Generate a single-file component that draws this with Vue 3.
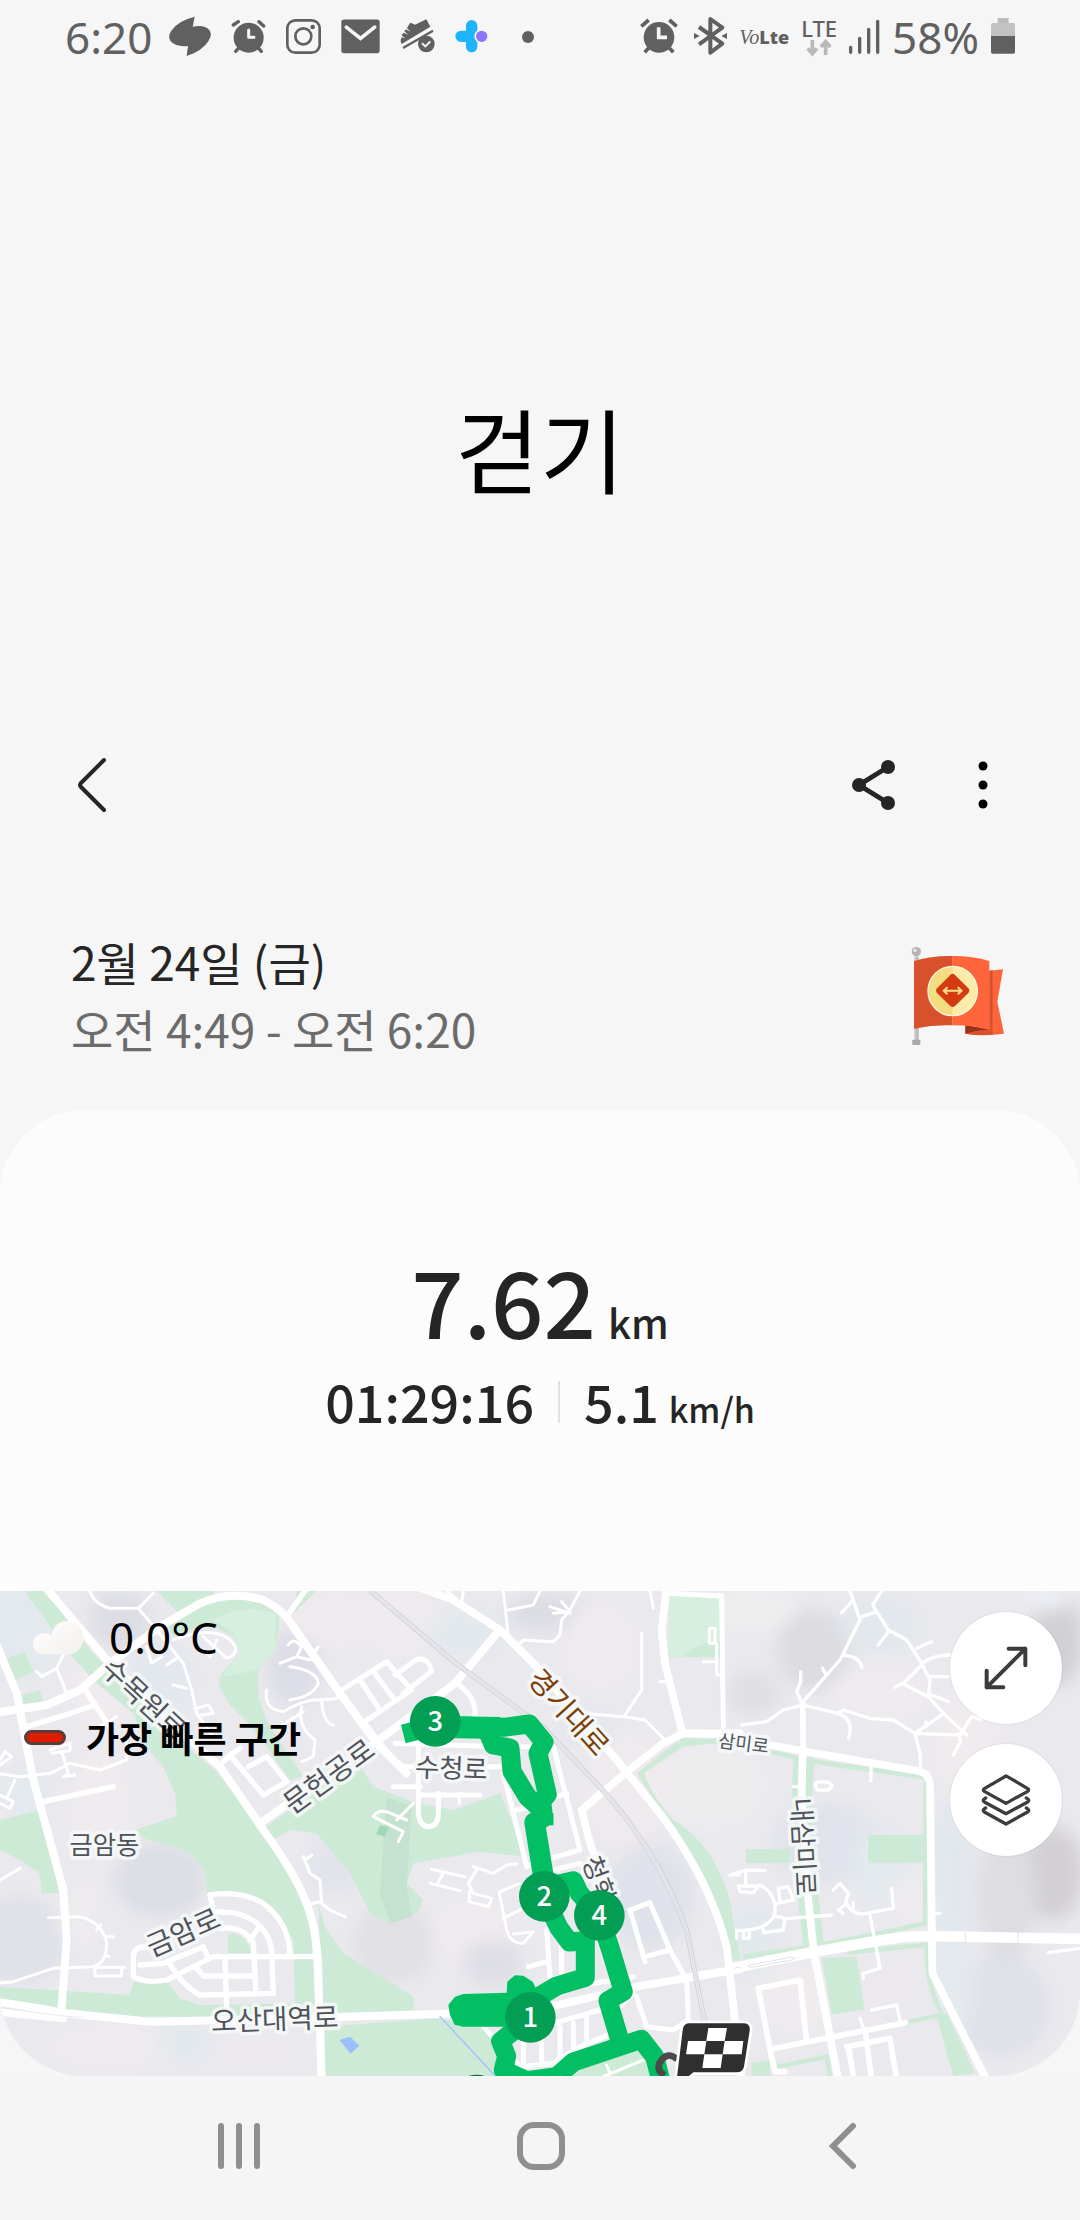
<template>
  <div class="screen">
    <header class="status-bar">
      <div class="status-group">
        <span class="status-text">6:20</span>
        <svg class="icon-leaf" width="42" height="41" viewBox="387 48 126 123">
          <path fill="#606060" d="M464 50L458 80Q494 74 508 90Q518 104 506 122Q488 152 440 168L444 138Q408 142 392 124Q382 110 394 92Q414 62 464 50Z" />
        </svg>
        <svg class="icon-alarm" width="35" height="41" viewBox="574 48 105 123">
          <g fill="none" stroke="#606060" stroke-width="10" stroke-linecap="round">
            <path d="M581 75L596 65M658 65L672 78M588 154L598 143M665 154L655 143" />
          </g>
          <circle cx="627" cy="113" r="45" fill="#606060" />
          <path d="M627 90V112H643" fill="none" stroke="#f6f6f6" stroke-width="9" stroke-linecap="round" stroke-linejoin="round" />
        </svg>
        <svg class="icon-insta" width="35" height="41" viewBox="741 48 105 123">
          <g fill="none" stroke="#606060" stroke-width="8">
            <rect x="745" y="61" width="97" height="97" rx="24" />
            <circle cx="793" cy="109" r="24" />
          </g>
          <circle cx="821" cy="81" r="7" fill="#606060" />
        </svg>
        <svg class="icon-mail" width="39" height="41" viewBox="905 48 118 123">
          <rect x="906" y="58" width="116" height="102" rx="8" fill="#606060" />
          <path d="M921 81L964 115L1007 81" fill="none" stroke="#f6f6f6" stroke-width="11" stroke-linecap="round" />
        </svg>
        <svg class="icon-shoe" width="35" height="41" viewBox="1085 48 105 123">
          <path fill="#606060" d="M1113 72L1117 68L1130 74L1164 58L1176 80L1090 132Q1084 122 1090 112L1100 115L1090 106L1096 98L1109 104L1098 94L1103 88L1116 95L1106 84Z" />
          <path d="M1094 144L1184 92" stroke="#606060" stroke-width="7" />
          <circle cx="1164" cy="132" r="25" fill="#606060" />
          <path d="M1151 130L1161 139L1176 124" fill="none" stroke="#f6f6f6" stroke-width="6" />
        </svg>
        <svg class="icon-plus" width="33" height="41" viewBox="1256 48 99 123">
          <path d="M1306 77V140M1274 109H1306" fill="none" stroke="#1eb4fb" stroke-width="34" stroke-linecap="round" />
          <circle cx="1336" cy="109" r="22" fill="#f6f6f6" />
          <circle cx="1336" cy="109" r="17" fill="#8a75ff" />
        </svg>
        <span class="dot"></span>
      </div>
      <div class="status-group">
        <svg class="icon-clock" width="38" height="41" viewBox="126 48 114 123">
          <path d="M130 79L152 60M214 60L236 79M140 157L152 144M226 157L214 144" stroke="#606060" stroke-width="11" />
          <circle cx="183" cy="112" r="46" fill="#606060" />
          <path d="M182 82V112H207" fill="none" stroke="#f6f6f6" stroke-width="11" />
        </svg>
        <svg class="icon-bt" width="33" height="41" viewBox="291 48 99 123">
          <path d="M306 81L376 131L340 158V57L376 83L306 133" fill="none" stroke="#606060" stroke-width="12" stroke-linejoin="round" />
          <path d="M291 99L308 108L291 117ZM390 99L373 108L390 117Z" fill="#606060" />
        </svg>
        <span class="volte"><i>Vo</i><b>Lte</b></span>
        <span class="lte">
          LTE
          <svg width="26" height="18" viewBox="0 0 78 54">
            <path d="M19 3V42M5 28L19 44L33 28M59 48V8M45 24L59 8L73 24" fill="none" stroke="#b9b9b9" stroke-width="11" />
          </svg>
        </span>
        <svg class="icon-signal" width="31" height="41" viewBox="743 48 93 123">
          <path d="M748 142V157M775 115V157M802 88V157M829 64V157" stroke="#606060" stroke-width="10" stroke-linecap="round" />
        </svg>
        <span class="status-text battery-text">58%</span>
        <svg width="24" height="41" viewBox="1173 48 72 123">
          <path d="M1193 54H1226V70H1193Z" fill="#bdbdbd" />
          <path d="M1173 74Q1173 69 1178 69H1240Q1245 69 1245 74V108H1173Z" fill="#c2c2c2" />
          <path d="M1173 108H1245V156Q1245 161 1240 161H1178Q1173 161 1173 156Z" fill="#606060" />
        </svg>
      </div>
    </header>

    <h1 class="title">걷기</h1>

    <div class="toolbar">
      <button type="button" class="icon-btn" aria-label="뒤로">
        <svg width="32" height="60" viewBox="0 0 32 60">
          <path d="M28 5L5 28Q3 30 5 32L28 55" fill="none" stroke="#252525" stroke-width="4" stroke-linecap="round" />
        </svg>
      </button>
      <div class="toolbar-actions">
        <button type="button" class="icon-btn" aria-label="공유">
          <svg width="46" height="54" viewBox="0 0 46 54">
            <path d="M37 9L8 27L37 45" fill="none" stroke="#252525" stroke-width="5" />
            <g fill="#252525">
              <circle cx="37" cy="9" r="7" />
              <circle cx="8" cy="27" r="7" />
              <circle cx="37" cy="45" r="7" />
            </g>
          </svg>
        </button>
        <button type="button" class="icon-btn" aria-label="더보기">
          <svg width="12" height="54" viewBox="0 0 24 108">
            <circle cx="12" cy="16" r="9" />
            <circle cx="12" cy="54" r="9" />
            <circle cx="12" cy="92" r="9" />
          </svg>
        </button>
      </div>
    </div>

    <section class="summary">
      <div>
        <p class="date">2월 24일 (금)</p>
        <p class="time">오전 4:49 - 오전 6:20</p>
      </div>
      <svg width="130" height="130" viewBox="0 0 390 390">
        <rect x="72" y="80" width="14" height="255" fill="#b9b9b9" />
        <rect x="72" y="80" width="5" height="255" fill="#d5d5d5" />
        <rect x="67" y="329" width="24" height="16" rx="2" fill="#a9a9a9" />
        <circle cx="79" cy="65" r="14" fill="#b5b5b5" />
        <circle cx="75" cy="61" r="5" fill="#ededed" />
        <path d="M226 285L298 296V122L339 118L322 215L342 311Q284 318 226 311Z" fill="#ff653b" />
        <path d="M298 122L308 121V315L298 315Z" fill="#d9502c" />
        <path d="M226 285L298 299Q262 300 226 311Z" fill="#96331b" />
        <path d="M226 311Q262 300 298 299V315Q262 317 226 311Z" fill="#d9502c" />
        <path d="M72 93Q130 76 188 78V286Q130 284 72 296Z" fill="#d9502c" />
        <path d="M188 78Q250 78 298 93V299Q250 286 188 286Z" fill="#ff653b" />
        <circle cx="188" cy="183" r="74" fill="#fdebaa" stroke="#fff7dc" stroke-width="4" />
        <path d="M188 111A72 72 0 0 0 188 255Z" fill="#f6dc80" />
        <path d="M181 135Q188 128 195 135L235 175Q241 182 235 189L195 228Q188 234 181 228L141 189Q135 182 141 175Z" fill="#d63a10" />
        <path d="M168 182H208M171 173L161 182L171 191M205 173L215 182L205 191" fill="none" stroke="#fbe18c" stroke-width="6" stroke-linecap="round" stroke-linejoin="round" />
      </svg>
    </section>

    <main class="card">
      <div class="stats">
        <p class="distance">
          <span>7.62</span>
          <span class="distance-unit">km</span>
        </p>
        <div class="stats-row">
          <span class="value">01:29:16</span>
          <span class="divider"></span>
          <span class="value">5.1</span>
          <span class="unit">km/h</span>
        </div>
      </div>

      <div class="map">
        <svg class="map-canvas" viewBox="0 33 3240 1455" preserveAspectRatio="xMidYMid slice">
          <defs>
            <filter id="soft" x="-30%" y="-30%" width="160%" height="160%">
              <feGaussianBlur stdDeviation="26" />
            </filter>
          </defs>
          <rect y="33" width="3240" height="1455" fill="#eae9ee" />

          <!-- 지형 음영 -->
          <g filter="url(#soft)">
            <ellipse
              v-for="(s, i) in shades"
              :key="i"
              :cx="s[0]"
              :cy="s[1]"
              :rx="s[2]"
              :ry="s[3]"
              :fill="s[4]"
            />
          </g>

          <!-- 녹지 -->
          <g fill="#cdead6">
            <path v-for="d in parks" :key="d" :d="d" />
            <g transform="translate(1020 0)">
              <path v-for="d in parksCenter" :key="d" :d="d" />
              <path d="M140 650L215 680L200 920L215 1010L150 1030L120 940Z" fill="#bfdccb" opacity="0.6" />
              <path d="M120 735L146 743L134 770L108 762Z" fill="#a3d8b6" />
              <path d="M990 45L1140 50L1145 180Q1060 190 1030 230H985Z" fill="#d7efdf" />
            </g>
            <g transform="translate(2040 0)">
              <path v-for="d in parksRight" :key="d" :d="d" />
              <g fill="none" stroke="#cdead6">
                <path d="M372 530L366 650L385 960L402 1100" stroke-width="62" />
                <path d="M0 480L110 484L260 512L400 545L738 592L735 1030L620 1055L420 1095L190 1130" stroke-width="14" />
                <path d="M500 1118L742 1094Q736 1210 785 1300M685 1326L785 1304M290 1460L440 1430L450 1488" stroke-width="14" />
              </g>
            </g>
          </g>
          <path d="M640 120Q720 70 830 100Q820 150 830 200L775 270L665 290L720 220L700 160Z" fill="#d6efdf" />
          <path d="M1018 1380L1050 1370L1078 1397L1052 1421Z" fill="#9cc0ff" />

          <!-- 도로 -->
          <g class="roads">
            <g stroke-width="9"><path v-for="d in lanes" :key="d" :d="d" /></g>
            <g stroke-width="16"><path v-for="d in streets" :key="d" :d="d" /></g>
            <g stroke-width="24"><path v-for="d in avenues" :key="d" :d="d" /></g>
            <path d="M5 1284L190 1308L250 1312" stroke="#dcdfe4" stroke-width="2" />
          </g>
          <g class="roads" transform="translate(1020 0)">
            <path d="M300 1310L466 1488" stroke="#9cc0ff" stroke-width="4" />
            <g stroke-width="9"><path v-for="d in lanesCenter" :key="d" :d="d" /></g>
            <g stroke-width="15"><path v-for="d in streetsCenter" :key="d" :d="d" /></g>
            <g stroke-width="23"><path v-for="d in avenuesCenter" :key="d" :d="d" /></g>
          </g>
          <g class="roads" transform="translate(2040 0)">
            <g stroke-width="10"><path v-for="d in lanesRight" :key="d" :d="d" /></g>
            <g stroke-width="17"><path v-for="d in streetsRight" :key="d" :d="d" /></g>
            <g stroke-width="23"><path v-for="d in avenuesRight" :key="d" :d="d" /></g>
            <path d="M0 1194L130 1172" stroke-width="20" />
            <path d="M150 1166L400 1116L620 1078Q680 1068 740 1068L1210 1077" stroke-width="32" />
            <path d="M163 1165Q174 1158 184 1164M205 1156L330 1132Q360 1132 335 1140L215 1162Q200 1162 205 1156M856 1056V1086M1014 1058V1090" stroke="#e3e3e6" stroke-width="3" />
          </g>

          <!-- 철도 -->
          <g class="roads" transform="translate(1020 0)">
            <path d="M92 33L350 252L610 442L780 622Q950 805 1040 1050L1095 1330" stroke="#cccfd5" stroke-width="15" />
            <path d="M92 33L350 252L610 442L780 622Q950 805 1040 1050L1095 1330" stroke="#ebebef" stroke-width="10" />
            <path d="M92 33L350 252L610 442L780 622Q950 805 1040 1050L1095 1330" stroke="#d2d4da" stroke-width="2" />
          </g>

          <!-- 이동 경로 -->
          <g transform="translate(1020 0)">
            <circle cx="410" cy="1560" r="76" fill="#087a3c" />
            <g fill="none" stroke="#03bf64" stroke-width="57" stroke-linejoin="round">
              <path d="M190 462L290 436L490 442L568 432L612 486L594 520L622 644L590 675" />
              <path d="M300 441L480 444" stroke-width="66" />
              <path d="M440 448L460 495L510 504L516 574L562 650L606 690" />
              <path d="M602 660L608 712L584 728L612 900" stroke-width="62" />
              <path d="M612 700L612 736" />
              <path d="M612 949L656 1042L688 1086L736 1082V1192L650 1218L580 1260" />
              <path d="M620 920L700 902L718 940L770 1000" />
              <path d="M778 1006L812 1110L850 1235L804 1262L838 1376" />
              <path d="M571 1312L482 1384L500 1428L490 1470L560 1502L650 1490L700 1446L904 1378L944 1430L962 1500" />
            </g>
            <path fill="#03bf64" d="M325 1275L345 1250L370 1242L500 1238L502 1205L525 1186L550 1187L578 1205L600 1250L580 1340H370L344 1334L330 1305Z" />
          </g>

          <text
            v-for="l in labels"
            :key="l.text"
            class="map-label"
            :transform="`translate(${l.x} ${l.y}) rotate(${l.rotate})`"
            :font-size="l.size"
            :fill="l.color || '#50545a'"
            dy="0.37em"
          >{{ l.text }}</text>

          <g v-for="b in badges" :key="b.km" class="badge" :transform="`translate(${b.x} ${b.y})`">
            <circle r="76" fill="#029e54" />
            <text dy="0.35em">{{ b.km }}</text>
          </g>

          <g transform="translate(2040 0)">
            <path d="M-8 1438Q-40 1410 -62 1450Q-70 1475 -45 1485" fill="none" stroke="#4a4a4a" stroke-width="20" />
            <path d="M26 1330H190Q212 1330 209 1352L192 1460Q188 1477 170 1477H40L12 1500H-10L8 1350Q11 1330 26 1330Z" fill="#2f2f2f" stroke="#fff" stroke-width="16" />
            <path d="M26 1330H190Q212 1330 209 1352L192 1460Q188 1477 170 1477H40L12 1500H-10L8 1350Q11 1330 26 1330Z" fill="#2f2f2f" />
            <path d="M85 1344H141L134 1383H79ZM24 1383H79L73 1423H18ZM134 1383H190L185 1423H128ZM73 1423H128L122 1464H67Z" fill="#fff" />
          </g>
        </svg>

        <div class="map-info">
          <div class="info-row">
            <svg width="54" height="40" viewBox="0 0 162 120">
              <defs>
                <linearGradient id="cloud" x1="0" x2="1" y1="0" y2="1">
                  <stop offset="0" stop-color="#ffffff" />
                  <stop offset="1" stop-color="#f3f0ec" />
                </linearGradient>
              </defs>
              <path d="M40 112Q6 110 6 80Q8 50 40 48Q54 48 62 54Q70 12 110 12Q152 14 157 60Q156 106 116 112Z" fill="url(#cloud)" />
            </svg>
            <span class="temperature">0.0°C</span>
          </div>
          <div class="info-row">
            <span class="legend"></span>
            <span class="legend-text">가장 빠른 구간</span>
          </div>
        </div>

        <div class="map-actions">
          <button type="button" class="round-btn" aria-label="지도 확대">
            <svg width="48" height="48" viewBox="0 0 144 144">
              <path d="M14 130L130 14M80 14H130V64M14 80V130H64" fill="none" stroke="#3c3c3c" stroke-width="12" stroke-linecap="round" stroke-linejoin="round" />
            </svg>
          </button>
          <button type="button" class="round-btn" aria-label="지도 종류">
            <svg width="50" height="52" viewBox="0 0 150 156">
              <g fill="none" stroke="#3c3c3c" stroke-width="10" stroke-linecap="round" stroke-linejoin="round">
                <path d="M75 6Q77 6 140 44Q146 48 140 52L75 88L10 52Q4 48 10 44Z" />
                <path d="M14 72Q2 78 10 84L75 119L140 84Q148 78 136 72" />
                <path d="M14 102Q2 108 10 114L75 150L140 114Q148 108 136 102" />
              </g>
            </svg>
          </button>
        </div>
      </div>
    </main>

    <nav class="nav-bar">
      <button type="button" aria-label="최근 앱">
        <svg width="48" height="48" viewBox="0 0 48 48">
          <path d="M6 4V44M24 4V44M42 4V44" stroke="#8f8f8f" stroke-width="6" stroke-linecap="round" />
        </svg>
      </button>
      <button type="button" aria-label="홈">
        <svg width="48" height="48" viewBox="0 0 48 48">
          <rect x="3" y="3" width="42" height="42" rx="14" fill="none" stroke="#8f8f8f" stroke-width="6" />
        </svg>
      </button>
      <button type="button" aria-label="이전">
        <svg width="48" height="48" viewBox="0 0 48 48">
          <path d="M34 4L14 24L34 44" fill="none" stroke="#8f8f8f" stroke-width="6" stroke-linecap="round" />
        </svg>
      </button>
    </nav>
  </div>
</template>

<script setup>
// cx, cy, rx, ry, color
const shades = [
  [60, 150, 130, 160, '#e3e9ee'],
  [360, 120, 90, 90, '#dcdde5'],
  [300, 330, 100, 130, '#efebef'],
  [480, 300, 110, 110, '#e3e8ee'],
  [880, 260, 80, 120, '#dcdde6'],
  [1000, 120, 130, 80, '#f0ebef'],
  [300, 680, 90, 190, '#efebee'],
  [80, 640, 70, 80, '#e3e9ee'],
  [480, 900, 140, 110, '#dcdee5'],
  [60, 1080, 150, 130, '#dfe1e8'],
  [240, 1000, 70, 110, '#eeebef'],
  [330, 1400, 180, 70, '#efebee'],
  [720, 1400, 160, 60, '#ece9ef'],
  [560, 1380, 80, 70, '#e2e9ed'],
  [1010, 850, 90, 90, '#e2e4ec'],
  [1180, 1090, 120, 120, '#e0e0e5'],
  [1420, 1060, 130, 110, '#efebef'],
  [1480, 1150, 90, 70, '#dedee5'],
  [1200, 120, 120, 120, '#efebee'],
  [1400, 160, 120, 70, '#e2e9ed'],
  [1640, 100, 120, 60, '#dcdde4'],
  [1800, 200, 120, 130, '#efebee'],
  [1880, 640, 130, 180, '#efeaee'],
  [1950, 950, 130, 160, '#dfe2ea'],
  [1760, 440, 90, 60, '#e3e7ee'],
  [2140, 620, 150, 120, '#eeedee'],
  [2260, 90, 130, 60, '#efeeef'],
  [2440, 210, 110, 120, '#dbdbe0'],
  [2260, 340, 80, 70, '#dfdfe4'],
  [2640, 140, 120, 90, '#e2e8ed'],
  [2640, 340, 150, 90, '#efebef'],
  [2480, 790, 160, 120, '#e0e3eb'],
  [2650, 860, 90, 130, '#e3eaee'],
  [2740, 960, 70, 70, '#efebef'],
  [2260, 1080, 90, 110, '#e2e9ed'],
  [2400, 1250, 140, 110, '#efebef'],
  [2660, 1270, 110, 140, '#ece9ee'],
  [2900, 500, 110, 180, '#efebef'],
  [2860, 900, 60, 260, '#e1e8ed'],
  [3170, 180, 80, 140, '#d2d0d4'],
  [3140, 60, 70, 30, '#eef2f7'],
  [3160, 880, 90, 140, '#d2cfd4'],
  [3020, 950, 90, 200, '#dddde2'],
  [3000, 1280, 150, 150, '#dfe1e9'],
  [2860, 1230, 60, 150, '#e4eaee'],
]

const parks = [
  'M75 33H135L270 210L560 500L650 575L790 750L870 870L930 990L945 1280L885 1270L880 1080L820 990L740 940L620 940L615 870L580 830L540 805L430 775L405 750L530 708L525 640L490 560L440 500L400 400L290 310L210 225Z',
  'M0 1220L390 1245L400 1205H500L540 1255L600 1275L940 1270V1310H400L200 1290L0 1255Z',
  'M0 720L120 690L165 850L175 940L125 940L118 880L60 840L0 810Z',
  'M20 235L75 215L100 275L45 300Z',
  'M65 345L120 330L130 370H70Z',
  'M470 33H640L650 60L550 115Z',
  'M500 130L640 60L740 45L840 90L830 200L775 270V350L800 420L850 500L910 590L870 600L800 500L740 425L690 375L655 315L665 280L720 220L700 170L620 130L520 170Z',
  'M890 33H950L880 100Z',
  'M955 970L975 1040L1030 1120L1240 1250V1290L965 1310Z',
  'M685 1060Q740 1060 755 1120L685 1120Z',
]
const parksCenter = [
  'M-220 790V740L-60 620L50 540L100 620L230 670L340 690L480 640L560 830L420 815L220 850L200 910L250 960L230 1000L150 1030L90 1000L30 880L-20 820L-70 760L-150 750Z',
  'M-45 1340L300 1315L470 1488H-45Z',
  'M310 1320L420 1330L490 1400L560 1488H470Z',
  'M560 1488L700 1440L960 1400V1488Z',
  'M990 45L1140 50L1145 232H985Z',
  'M890 580L1010 487L1150 474V486L1030 500L912 578Q930 640 1000 720Q1120 790 1170 960L1200 1140H1170Q1130 1000 1100 900Q1000 750 890 580Z',
]
const parksRight = [
  'M565 765H735V848H565Z',
  'M198 808H330V850H198Z',
  'M425 1135L530 1130L553 1288L455 1305Z',
  'M770 1310L800 1300L885 1480L820 1488Z',
  'M215 1450L270 1440V1488H215Z',
]

const avenues = [
  'M135 20L320 240L560 470L660 560L790 750Q900 900 930 1000Q955 1080 955 1200L965 1500',
  'M-10 195L50 340L100 600L190 930L200 1080L185 1280',
  'M-10 398L140 375L240 330L330 250L480 140L600 70Q690 30 790 60Q850 90 880 140L1020 340L1130 490L1220 580',
  'M-10 1265L120 1285L200 1300L450 1325L700 1320L1380 1300',
  'M-10 1295L190 1315',
  'M780 730L1130 485L1365 310L1490 160',
]
const streets = [
  'M80 440L180 410L285 375L250 320',
  'M285 375L330 440',
  'M130 665L340 620',
  'M860 110L915 33',
  'M630 945Q720 930 790 970Q870 1030 870 1130',
  'M630 945L640 995L700 998Q800 1020 815 1110L820 1240L600 1245Q550 1220 505 1145',
  'M660 1045Q730 1035 760 1090L768 1240',
  'M440 1100Q400 1100 400 1130V1190Q440 1212 500 1200L640 1130H955',
  'M420 1155L490 1150L610 1100L625 1135',
  'M675 1135L680 1290',
  'M590 1165L610 1188H760',
  'M775 1045L750 1080',
  'M655 560L690 525L790 645L860 605L800 530L745 560',
  'M690 525L720 505',
]
const lanes = [
  'M270 33Q280 70 330 85H415L460 40M415 85L470 150L550 250L575 330L590 400L640 470',
  'M590 385L625 375L640 400L605 405M520 315L560 325M500 255L530 235M440 200L455 250L485 230',
  'M520 180Q650 130 700 190Q720 220 680 235L610 170M630 230L650 180',
  'M110 275L125 290L170 265L200 340M170 265L190 225',
  'M-10 580L60 590L150 580L210 550L300 570L380 540V470M300 440L350 410',
  'M150 510L210 490V512L155 520M185 515L205 580L190 590L225 585',
  'M0 555L35 530L15 515L0 540M45 600L20 655L40 665L30 685L0 670M20 655L0 645',
  'M145 1013L240 1010Q310 1030 320 1090Q320 1150 280 1160L160 1165L40 1205L-10 1210',
  'M290 1162H375M285 1165V1188H365V1165M340 1070H320M290 1050L302 1035M328 1130L315 1125',
  'M0 900L60 865M910 830L930 880L960 900L965 970L990 990L1035 1010M935 825L915 840M960 965L930 972',
  'M865 195Q880 170 905 200L890 230L840 250M890 230L930 240L955 200M870 260Q950 270 955 310Q940 350 870 360',
  'M800 330Q790 390 850 395Q900 365 940 360L1000 358L1030 345M905 380Q890 440 945 480L940 530L905 545M965 365Q970 430 1000 435M840 440L910 395',
]

const avenuesCenter = [
  'M230 20L340 60L480 150L590 260L830 540L960 700Q1110 900 1160 1100L1205 1500',
  'M855 580L725 690L750 790L800 930',
  'M855 580L970 490L1030 460L1200 460',
  'M980 20L965 150L975 250L1025 450',
  'M640 1278L900 1218L1200 1168',
]
const streetsCenter = [
  'M980 40L1145 48L1150 440',
  'M5 330L140 245L215 330L70 428M60 300L120 390M100 275L165 360',
  'M165 285L230 238Q268 232 274 275L190 340',
  'M350 310Q410 350 405 410',
  'M480 500H640L720 810L650 830L560 860L490 580',
  'M530 690L580 680M650 650L680 640M600 880L720 850',
  'M75 430L160 540L190 560L480 560M165 490L480 500',
  'M235 490V700Q240 740 265 740Q295 740 295 700V640M160 620H240M240 645H420',
  'M620 1050L630 1200L740 1170M565 1160L620 1145M665 1100V1180',
  'M870 990L930 968L990 1110L1040 1200L1045 1320M870 990L915 1145M915 1130L990 1110',
  'M430 1340L540 1460L640 1450L720 1400L840 1350M640 1330L780 1290M550 1370V1450M605 1380V1440M660 1340V1430M700 1330V1400M740 1310V1380',
  'M890 1250L920 1340L1000 1350L1045 1320M760 1210L880 1190M820 1300L880 1240',
]
const lanesCenter = [
  'M320 33L365 70L370 33M490 33L505 170M505 90L580 75L600 33',
  'M530 200L550 180L640 185L660 165L665 120L690 90L720 33M630 80L690 100M665 65L690 95L640 100',
  'M905 160V330L855 405M730 400L850 410L915 420L970 475M930 33L940 85',
  'M1110 145H1125V190H1108V148M1090 245H1130M1130 190V285H1150M960 305H975',
  'M100 710Q110 690 140 695L200 720M100 710L190 755L175 785M170 720L220 670M358 640V670',
  'M275 868L375 890M310 880L290 915M270 910L360 932M400 860L460 880L500 855L530 852',
  'M410 870L385 910L400 940L455 955L445 980L388 965V935M480 935L535 912M478 940L500 1050Q510 1090 550 1090L580 1055L520 1062M490 1015L550 985',
  'M790 1490L910 1440M800 1455L810 1480M905 1210L1030 1190M1175 885H1200M1190 1050V1075',
]

const avenuesRight = [
  'M0 460L120 462L260 493L380 515L715 573Q750 580 750 620L757 1180L925 1510',
  'M368 510L365 650L385 960L402 1120L475 1500',
]
const streetsRight = [
  'M368 370L370 520',
  'M235 1225L360 1200L380 1385M235 1225L270 1408L675 1328',
  'M270 1410L285 1475H315M500 1400L630 1375L650 1500M505 1400L522 1500M555 1350L575 1500',
]
const lanesRight = [
  'M185 435L260 425L310 390L368 375L475 400L490 390L570 415L640 420L705 460L840 465L875 410L905 418',
  'M365 370L480 240L540 120L510 33M540 112L590 95L578 75L605 33M590 95L625 150L680 180L725 250L750 300L745 350L790 400L860 465',
  'M625 155L595 195M485 98L515 65M490 225Q540 230 545 262M428 265L438 285M362 275V305L350 335L365 370M475 400Q525 420 505 475',
  'M710 205L755 185M725 250Q760 225 810 225M725 255L670 310L645 322M670 312L745 350M750 290H805M755 345L805 365M705 460L785 405M705 460L720 520L722 565M835 460L842 485L820 525M738 425V440',
  'M573 560V603M340 620H370M405 612L415 606H445L456 618L445 630H412Z',
  'M150 885L200 870L255 872M197 875V915M175 918H235L220 938L180 935ZM240 915Q290 940 285 1000Q270 1050 175 1052M190 1055V1075H208V1055',
  'M290 970L340 960L325 920L295 925L300 965M290 1010L320 1016L455 1005M315 1015L310 1050L250 1058V1048',
  'M460 930L480 910L505 940L495 975L475 990L490 1000M500 970Q520 1010 560 1000L640 985L635 925M570 1005L600 1165L550 1180V1195M520 968V985',
  'M765 1000H780M1105 1118L1200 1105M575 1290L650 1275L660 1320M540 1315L555 1360',
]

const labels = [
  { text: '수목원로', x: 432, y: 356, rotate: 43, size: 84 },
  { text: '문헌공로', x: 986, y: 588, rotate: -36, size: 85 },
  { text: '금암동', x: 313, y: 794, rotate: 0, size: 76 },
  { text: '금암로', x: 549, y: 1056, rotate: -24, size: 84 },
  { text: '오산대역로', x: 824, y: 1317, rotate: -2, size: 83 },
  { text: '수청로', x: 1354, y: 564, rotate: 2, size: 79 },
  { text: '경기대로', x: 1707, y: 396, rotate: 48, size: 85, color: '#7b3d06' },
  { text: '청학', x: 1798, y: 898, rotate: 70, size: 78 },
  { text: '삼미로', x: 2231, y: 490, rotate: 7, size: 55 },
  { text: '내삼미로', x: 2411, y: 800, rotate: 87, size: 80 },
]

const badges = [
  { km: 3, x: 1306, y: 424 },
  { km: 2, x: 1633, y: 949 },
  { km: 4, x: 1798, y: 1006 },
  { km: 1, x: 1591, y: 1312 },
]
</script>

<style>
body {
  background-color: #f6f6f6;
}
</style>

<style scoped>
.screen {
  min-height: 100vh;
  display: flex;
  flex-direction: column;
  background-color: #f6f6f6;
  color: #252525;
  font-family: 'Noto Sans CJK KR', 'Noto Sans', sans-serif;
}

p,
h1 {
  margin: 0;
}

svg {
  display: block;
  flex-shrink: 0;
}

button {
  padding: 0;
  border: none;
  background: none;
  cursor: pointer;
}

/* 상태 표시줄 */
.status-bar {
  display: flex;
  justify-content: space-between;
  align-items: center;
  height: 73px;
  padding: 0 65px;
  color: #606060;
}

.status-group {
  display: flex;
  align-items: center;
  gap: 20px;
}

.status-group:last-child {
  gap: 12px;
}

.status-text {
  font-family: 'Noto Sans', sans-serif;
  font-size: 44px;
  font-weight: 400;
  line-height: 60px;
}

.status-group .status-text:first-child {
  margin-right: -3px;
}

.dot {
  width: 12px;
  height: 12px;
  margin-left: 14px;
  border-radius: 50%;
  background-color: #606060;
}

.icon-clock {
  margin-right: 4px;
}

.volte {
  font-size: 20px;
  line-height: 24px;
}

.volte i {
  font-family: 'Liberation Serif', serif;
}

.volte b {
  font-family: 'Open Sans', sans-serif;
  font-weight: 800;
  font-size: 18px;
}

.lte {
  display: flex;
  flex-direction: column;
  align-items: center;
  font-family: 'Noto Sans', sans-serif;
  font-size: 22px;
  font-weight: 500;
  line-height: 22px;
}

/* 제목 */
.title {
  padding: 319px 0 251px;
  color: #000;
  font-size: 92px;
  font-weight: 400;
  line-height: 110px;
  text-align: center;
}

.toolbar {
  display: flex;
  justify-content: space-between;
  align-items: center;
  height: 64px;
  padding: 0 91px 0 76px;
}

.toolbar-actions {
  display: flex;
  gap: 80px;
}

.summary {
  display: flex;
  justify-content: space-between;
  align-items: center;
  padding: 111px 60px 48px 71px;
  font-size: 46px;
  line-height: 67px;
}

.time {
  color: #6b6b6b;
}

/* 운동 기록 카드 */
.card {
  overflow: hidden;
  border-radius: 84px;
  background-color: #fcfcfc;
}

.stats {
  display: flex;
  flex-direction: column;
  align-items: center;
  gap: 16px;
  padding: 133px 0 158px;
}

.distance {
  display: flex;
  align-items: baseline;
  gap: 12px;
  font-size: 92px;
  font-weight: 500;
  line-height: 112px;
}

.distance-unit {
  font-size: 40px;
  line-height: 60px;
}

.stats-row {
  display: flex;
  align-items: baseline;
}

.value {
  font-size: 52px;
  font-weight: 500;
  line-height: 60px;
}

.divider {
  align-self: center;
  width: 2px;
  height: 42px;
  margin: 0 24px;
  background-color: #e2e2e2;
}

.unit {
  margin-left: 10px;
  font-size: 34px;
  font-weight: 500;
  line-height: 48px;
}

/* 지도 */
.map {
  position: relative;
}

.map-canvas {
  width: 100%;
  height: auto;
}

.roads {
  fill: none;
  stroke: #fff;
  stroke-linecap: round;
  stroke-linejoin: round;
}

.map-label {
  font-weight: 400;
  text-anchor: middle;
  stroke: rgba(246, 249, 249, 0.85);
  stroke-width: 22px;
  stroke-linejoin: round;
  paint-order: stroke;
}

.badge text {
  fill: #fff;
  font-size: 82px;
  font-weight: 500;
  text-anchor: middle;
}

.map-info {
  position: absolute;
  top: 14px;
  left: 24px;
  display: flex;
  flex-direction: column;
  gap: 38px;
  color: #000;
}

.info-row {
  display: flex;
  align-items: center;
}

.info-row svg {
  margin-left: 7px;
}

.temperature {
  margin-left: 24px;
  font-family: 'Noto Sans', sans-serif;
  font-size: 44px;
  line-height: 64px;
}

.legend {
  box-sizing: border-box;
  width: 42px;
  height: 15px;
  border: 3px solid #5a3c38;
  border-radius: 8px;
  background-color: #dd1c00;
}

.legend-text {
  margin-left: 20px;
  font-size: 36px;
  font-weight: 700;
  line-height: 60px;
}

.map-actions {
  position: absolute;
  top: 21px;
  right: 18px;
  display: flex;
  flex-direction: column;
  gap: 20px;
}

.round-btn {
  display: flex;
  justify-content: center;
  align-items: center;
  width: 112px;
  height: 112px;
  border-radius: 50%;
  background-color: #fff;
  box-shadow: 0 0 2px rgba(0, 0, 0, 0.15);
}

/* 하단 내비게이션 */
.nav-bar {
  display: flex;
  align-items: center;
  height: 140px;
  padding: 0 86px 4px 88px;
  background-color: #f5f5f5;
}

.nav-bar button {
  flex: 1;
  display: flex;
  justify-content: center;
}
</style>
